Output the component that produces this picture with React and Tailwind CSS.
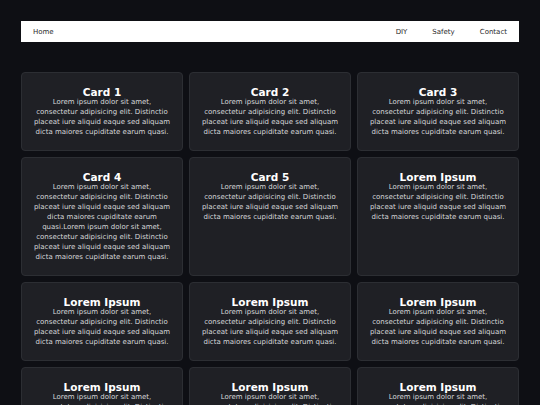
const lorem =
  'Lorem ipsum dolor sit amet, consectetur adipisicing elit. Distinctio placeat iure aliquid eaque sed aliquam dicta maiores cupiditate earum quasi.';

const cards = [
  { title: 'Card 1', body: lorem },
  { title: 'Card 2', body: lorem },
  { title: 'Card 3', body: lorem },
  { title: 'Card 4', body: lorem + lorem },
  { title: 'Card 5', body: lorem },
  { title: 'Lorem Ipsum', body: lorem },
  { title: 'Lorem Ipsum', body: lorem },
  { title: 'Lorem Ipsum', body: lorem },
  { title: 'Lorem Ipsum', body: lorem },
  { title: 'Lorem Ipsum', body: lorem },
  { title: 'Lorem Ipsum', body: lorem },
  { title: 'Lorem Ipsum', body: lorem },
];

function Card({ title, body }) {
  return (
    <div className="rounded-[4px] border border-[#2c2e33] bg-[#1f2025] px-[11px] pt-[14px] pb-[13px] text-center">
      <h2 className="text-[10.5px] leading-[10px] font-bold text-white">{title}</h2>
      <p className="text-[7px] leading-[10px] text-[#d6d7da]">{body}</p>
    </div>
  );
}

export default function App() {
  return (
    <div
      className="min-h-screen bg-[#0e0f14] px-[21px] pt-[21px] pb-[21px]"
      style={{ fontFamily: '"DejaVu Sans", Verdana, sans-serif' }}
    >
      <nav className="flex h-[21px] items-center justify-between bg-white px-[12px] pt-[1px] text-[7px] text-[#2a2a2a]">
        <a href="#">Home</a>
        <div className="flex gap-[25px]">
          <a href="#">DIY</a>
          <a href="#">Safety</a>
          <a href="#">Contact</a>
        </div>
      </nav>
      <main className="mt-[30px] grid grid-cols-3 gap-[6px]">
        {cards.map((card, i) => (
          <Card key={i} title={card.title} body={card.body} />
        ))}
      </main>
    </div>
  );
}
